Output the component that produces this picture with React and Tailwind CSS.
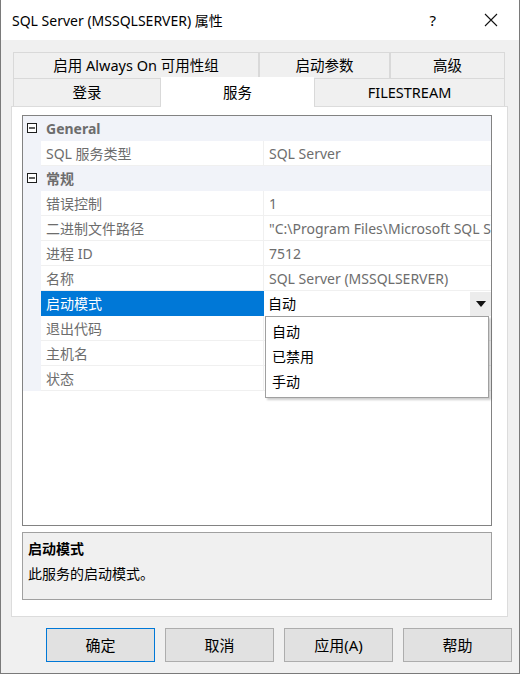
const font = "font-['Noto_Sans','Noto_Sans_CJK_SC',sans-serif]";

function MinusBox() {
  return (
    <svg width="10" height="10" viewBox="0 0 10 10" aria-hidden="true">
      <rect x="0.5" y="0.5" width="9" height="9" fill="white" stroke="#1e1e1e" />
      <line x1="2" y1="5" x2="8" y2="5" stroke="#1e1e1e" strokeWidth="1.4" />
    </svg>
  );
}

function CategoryRow({ label }) {
  return (
    <div className="flex h-[25px] bg-[#f1f3f9]">
      <div className="flex w-[18px] items-center justify-center pb-[2px]">
        <MinusBox />
      </div>
      <div className="flex items-center pl-[5px] text-[14px] font-bold text-[#6d6d6d]">{label}</div>
    </div>
  );
}

function PropRow({ label, value }) {
  return (
    <div className="flex h-[25px]">
      <div className="w-[18px] shrink-0 bg-[#f1f3f9]" />
      <div className="flex w-[223px] shrink-0 items-center border-b border-r border-[#f0f0f0] bg-white pl-[5px] text-[14px] text-[#6d6d6d]">
        {label}
      </div>
      <div className="flex min-w-0 flex-1 items-center overflow-hidden whitespace-nowrap border-b border-[#f0f0f0] pl-[5px] text-[14px] text-[#6d6d6d]">
        {value}
      </div>
    </div>
  );
}

function SelectedRow() {
  return (
    <div className="relative flex h-[25px]">
      <div className="w-[18px] shrink-0 bg-[#f1f3f9]" />
      <div className="flex w-[223px] shrink-0 items-center bg-[#0078d7] pl-[5px] text-[14px] text-white">启动模式</div>
      <div className="flex flex-1 items-center justify-between bg-white pl-[4px]">
        <span className="text-[14px] text-black">自动</span>
        <div className="flex h-[24px] w-[21px] items-center justify-center bg-[#ececec]">
          <svg width="10" height="6" viewBox="0 0 10 6" aria-hidden="true">
            <path d="M0 0h10L5 6z" fill="#111" />
          </svg>
        </div>
      </div>
      <div className="absolute left-[242px] top-[25px] z-10 w-[224px] border border-[#a0a0a0] bg-white pt-[2px] pb-[3px] shadow-[2px_2px_2px_rgba(0,0,0,0.2)]">
        {['自动', '已禁用', '手动'].map((item) => (
          <div key={item} className="flex h-[25px] items-center pl-[6px] text-[14px] text-black">
            {item}
          </div>
        ))}
      </div>
    </div>
  );
}

function Tab({ label, w, active, h }) {
  return (
    <div
      className={`flex items-center justify-center border-[#d9d9d9] text-[14.5px] text-black ${
        active ? 'relative z-10 -mt-[1px] -mb-[1px] bg-white' : 'border bg-[#f0f0f0]'
      }`}
      style={{ width: w, height: active ? h + 2 : h }}
    >
      {label}
    </div>
  );
}

export default function App() {
  return (
    <div className={`${font} flex h-[674px] w-[520px] flex-col border-x border-b border-[#7a7a7a] bg-[#f0f0f0]`}>
      <div className="flex h-[40px] shrink-0 items-center bg-white pl-[11px]">
        <span className="text-[14px] text-black">SQL Server (MSSQLSERVER) 属性</span>
        <span className="ml-auto mr-[48px] text-[15px] text-black">?</span>
        <svg className="mr-[21px]" width="14" height="14" viewBox="0 0 14 14" aria-hidden="true">
          <path d="M1 1l12 12M13 1L1 13" stroke="#111" strokeWidth="1.1" />
        </svg>
      </div>

      <div className="flex flex-col pl-[10px] pr-[11px] pt-[12px]">
        <div className="ml-[2px] flex">
          <Tab label="启用 Always On 可用性组" w={246} h={27} />
          <Tab label="启动参数" w={131} h={27} />
          <Tab label="高级" w={115} h={27} />
        </div>
        <div className="ml-[2px] -mt-[1px] flex">
          <Tab label="登录" w={148} h={29} />
          <Tab label="服务" w={153} h={29} active />
          <Tab label="FILESTREAM" w={191} h={29} />
        </div>

        <div className="-mt-[1px] flex h-[511px] flex-col border border-[#dcdcdc] bg-white pl-[10px] pr-[15px] pt-[8px]">
          <div className="h-[411px] border border-[#828282] bg-white">
            <CategoryRow label="General" />
            <PropRow label="SQL 服务类型" value="SQL Server" />
            <CategoryRow label="常规" />
            <PropRow label="错误控制" value="1" />
            <PropRow label="二进制文件路径" value={'"C:\\Program Files\\Microsoft SQL Se'} />
            <PropRow label="进程 ID" value="7512" />
            <PropRow label="名称" value="SQL Server (MSSQLSERVER)" />
            <SelectedRow />
            <PropRow label="退出代码" value="" />
            <PropRow label="主机名" value="" />
            <PropRow label="状态" value="" />
          </div>

          <div className="mt-[6px] h-[68px] border border-[#a0a0a0] bg-[#f0f0f0] pl-[5px] pt-[3px]">
            <div className="text-[14px] font-bold leading-[25px] text-black">启动模式</div>
            <div className="text-[14px] leading-[25px] text-black">此服务的启动模式。</div>
          </div>
        </div>
      </div>

      <div className="mt-[11px] flex justify-end gap-[10px] pr-[7px]">
        <button className="h-[34px] w-[109px] border border-[#0078d7] bg-[#e1e1e1] text-[15px] text-black" type="button">
          确定
        </button>
        <button className="h-[34px] w-[109px] border border-[#adadad] bg-[#e1e1e1] text-[15px] text-black" type="button">
          取消
        </button>
        <button className="h-[34px] w-[109px] border border-[#adadad] bg-[#e1e1e1] text-[15px] text-black" type="button">
          应用(A)
        </button>
        <button className="h-[34px] w-[109px] border border-[#adadad] bg-[#e1e1e1] text-[15px] text-black" type="button">
          帮助
        </button>
      </div>
    </div>
  );
}
